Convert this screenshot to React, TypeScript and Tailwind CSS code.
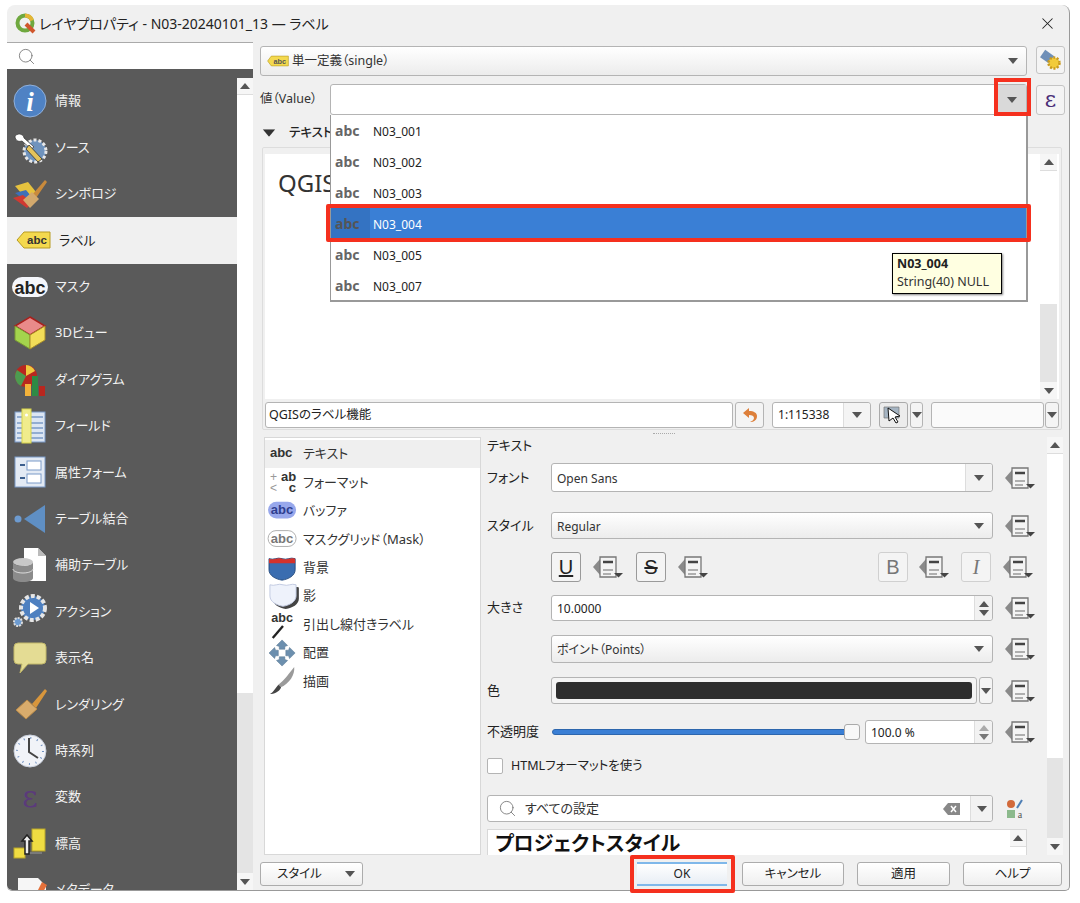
import React from 'react';
import { Search, X } from 'lucide-react';

const Arrow = ({ up = false, className = 'text-[#555]' }: { up?: boolean; className?: string }) => (
  <svg width="10" height="6" viewBox="0 0 10 6" className={className}>
    <path d={up ? 'M5 0L10 6H0Z' : 'M0 0H10L5 6Z'} fill="currentColor" />
  </svg>
);

const AbcText = ({ x = 18, y = 23, size = 13, fill = '#333' }: { x?: number; y?: number; size?: number; fill?: string }) => (
  <text x={x} y={y} textAnchor="middle" fontSize={size} fontWeight="700" fontFamily="Liberation Sans, sans-serif" fill={fill}>
    abc
  </text>
);

const icons: Record<string, React.ReactNode> = {
  info: (
    <>
      <circle cx="18" cy="18" r="16" fill="#4f82c4" stroke="#8fb0dc" />
      <text x="18" y="28" textAnchor="middle" fontSize="27" fontWeight="700" fontStyle="italic" fontFamily="Liberation Serif, serif" fill="#fff">i</text>
    </>
  ),
  source: (
    <>
      <circle cx="23" cy="21" r="11" fill="#6f93bd" stroke="#e8e8e8" strokeWidth="3" strokeDasharray="3 2" />
      <path d="M3 6c4-4 9-1 9 2l10 9-3 2-9-8c-3 1-7 0-7-5z" fill="#fff" stroke="#333" strokeWidth=".7" />
      <path d="M17 15l13 14-4 3L14 19z" fill="#e5c35a" stroke="#333" strokeWidth=".8" />
    </>
  ),
  symbology: (
    <>
      <path d="M3 10l13-4 8 10-8 9z" fill="#e6c23e" />
      <path d="M3 17l11-3 5 6-5 5z" fill="#3e70b8" />
      <path d="M1 22l10-3 9 8-5 5z" fill="#cf3a32" />
      <path d="M20 19L33 4l2 2-11 16z" fill="#c98a3c" />
      <path d="M11 24l9-8 7 7-9 9z" fill="#d3a96d" />
    </>
  ),
  label: (
    <>
      <path d="M1 18l7-8h26v16H8z" fill="#f4d94e" stroke="#b79b22" />
      <AbcText x={21} y={22} size={11.5} />
    </>
  ),
  mask: (
    <>
      <rect x="0" y="8" width="36" height="20" rx="10" fill="#f4f6fb" />
      <text x="18" y="25" textAnchor="middle" fontSize="18" fontWeight="700" fontFamily="Liberation Sans, sans-serif" fill="#222">abc</text>
    </>
  ),
  view3d: (
    <>
      <path d="M18 2l15 9-15 9-15-9z" fill="#e98a8a" stroke="#a8201c" strokeWidth="1.5" />
      <path d="M3 11l15 9v14L3 25z" fill="#a4d44d" stroke="#7a9a34" />
      <path d="M33 11l-15 9v14l15-9z" fill="#f2dd58" stroke="#a88d2a" />
    </>
  ),
  diagram: (
    <>
      <circle cx="14" cy="14" r="11" fill="#b9271f" />
      <path d="M14 14V3a11 11 0 0 1 9 6z" fill="#f0c93e" />
      <path d="M14 14L5 8a11 11 0 0 0 4 16z" fill="#4d9b50" />
      <rect x="13" y="22" width="6" height="12" fill="#f3b23a" />
      <rect x="20" y="14" width="6" height="20" fill="#2f8a45" />
      <rect x="27" y="24" width="6" height="10" fill="#b9271f" />
    </>
  ),
  fields: (
    <>
      <rect x="3" y="4" width="30" height="30" fill="#dce6f3" stroke="#7a9ac8" />
      <path d="M5 9h26M5 15h26M5 20h26M5 25h26M5 30h26" stroke="#7a9ac8" strokeWidth="1.5" />
      <rect x="10" y="1" width="9" height="34" fill="#f0ec8c" stroke="#d8d34a" />
      <circle cx="14.500" cy="7" r="1.500" fill="#fff" />
    </>
  ),
  form: (
    <>
      <rect x="3" y="3" width="30" height="30" fill="#e3eaf4" stroke="#7a9ac8" />
      <rect x="15" y="7" width="14" height="9" fill="#fff" stroke="#7a9ac8" />
      <rect x="15" y="20" width="14" height="9" fill="#fff" stroke="#7a9ac8" />
      <path d="M8 11h5M8 24h5" stroke="#3c5f8e" strokeWidth="2" />
    </>
  ),
  join: (
    <>
      <circle cx="6" cy="18" r="3.500" fill="#6d9bd0" />
      <path d="M12 18L33 4v28z" fill="#5f8fc4" />
    </>
  ),
  aux: (
    <>
      <path d="M12 1h14l8 8v25H12z" fill="#fff" />
      <path d="M26 1v8h8z" fill="#bbb" />
      <ellipse cx="11" cy="15" rx="10" ry="4" fill="#c8c8c8" />
      <path d="M1 15v16c0 2 4 4 10 4s10-2 10-4V15c0 2-4 4-10 4s-10-2-10-4z" fill="#8b8b8b" />
      <path d="M1 22c0 2 4 4 10 4s10-2 10-4" stroke="#ddd" fill="none" />
    </>
  ),
  action: (
    <>
      <circle cx="21" cy="15" r="12" fill="#4e80c0" stroke="#e6e6e6" strokeWidth="4" strokeDasharray="4 2" />
      <path d="M18 9l9 6-9 6z" fill="#fff" />
      <circle cx="6" cy="29" r="4" fill="#6d9bd0" stroke="#ddd" strokeWidth="2" strokeDasharray="2 1" />
    </>
  ),
  display: (
    <path d="M6 3h24a4 4 0 0 1 4 4v13a4 4 0 0 1-4 4H16l-8 9 2-9H6a4 4 0 0 1-4-4V7a4 4 0 0 1 4-4z" fill="#e4dc94" stroke="#c2b86a" />
  ),
  rendering: (
    <>
      <path d="M20 18L33 3l2 2-11 17z" fill="#d8963c" />
      <path d="M4 24l11-10 10 9-11 10z" fill="#d9ac6c" stroke="#b98a48" />
    </>
  ),
  time: (
    <>
      <circle cx="18" cy="18" r="16" fill="#f1f3f8" stroke="#c8cfdd" />
      <circle cx="18" cy="18" r="13" fill="none" stroke="#6d8fc0" strokeWidth="2" strokeDasharray="1 5.800" />
      <path d="M17 5v14l9 6" fill="none" stroke="#444" strokeWidth="2" />
    </>
  ),
  vars: (
    <text x="18" y="28" textAnchor="middle" fontSize="30" fontFamily="DejaVu Serif, serif" fill="#5b3a7a">ε</text>
  ),
  elevation: (
    <>
      <rect x="20" y="4" width="13" height="22" fill="#f0dc42" stroke="#b8a52a" />
      <rect x="2" y="23" width="11" height="10" fill="#f0dc42" stroke="#b8a52a" />
      <path d="M14 28h16" stroke="#999" />
      <path d="M15 10l-5 6h3v13h4V16h3z" fill="#eee" stroke="#222" strokeWidth="1.500" />
    </>
  ),
  metadata: (
    <>
      <path d="M6 6h20l8 8v22H6z" fill="#f6f6f6" />
      <path d="M10 20h16M10 25h14M10 30h10" stroke="#999" strokeWidth="2" />
      <path d="M30 10l5 3-9 16-5 3 1-6z" fill="#e4703a" />
    </>
  ),
};

const navItems = [
  ['info', '情報'], ['source', 'ソース'], ['symbology', 'シンボロジ'], ['label', 'ラベル'],
  ['mask', 'マスク'], ['view3d', '3Dビュー'], ['diagram', 'ダイアグラム'], ['fields', 'フィールド'],
  ['form', '属性フォーム'], ['join', 'テーブル結合'], ['aux', '補助テーブル'], ['action', 'アクション'],
  ['display', '表示名'], ['rendering', 'レンダリング'], ['time', '時系列'], ['vars', '変数'],
  ['elevation', '標高'], ['metadata', 'メタデータ'],
];

const DataDefined = ({ className = '' }: { className?: string }) => (
  <svg width="30" height="22" viewBox="0 0 30 22" className={`shrink-0 ${className}`}>
    <path d="M0 11l7-8v16z" fill="#8a8a8a" />
    <path d="M7 1h16v20H7z" fill="#f4f4f4" stroke="#777" strokeWidth="1.300" />
    <path d="M10 6h10" stroke="#444" strokeWidth="2.500" />
    <path d="M10 14h10" stroke="#999" strokeWidth="1.500" />
    <path d="M10 18h8" stroke="#999" strokeWidth="1.500" />
    <path d="M21 17h9l-4.500 4.500z" fill="#444" />
  </svg>
);

const Combo = ({ text, width = 'w-[442px]', white = false, divider = false }: { text: string; width?: string; white?: boolean; divider?: boolean }) => (
  <div className={`${width} h-full flex items-center rounded-[3px] border border-[#b4b4b4] ${white ? 'bg-white' : 'bg-gradient-to-b from-white to-[#ececec]'}`}>
    <span className="flex-1 pl-[5px] mt-[2px] text-[12px] text-[#333]">{text}</span>
    <span className={`w-[27px] h-full flex items-center justify-center ${divider ? 'border-l border-[#ddd] bg-[#f2f2f2] rounded-r-[3px]' : ''}`}>
      <Arrow />
    </span>
  </div>
);

const Spin = ({ dim = false }: { dim?: boolean }) => (
  <span className="w-[18px] h-full flex flex-col items-center justify-center gap-[3px] border-l border-[#ddd] bg-[#f2f2f2] rounded-r-[3px]">
    <Arrow up className={dim ? 'text-[#aaa]' : 'text-[#555]'} />
    <Arrow className={dim ? 'text-[#777]' : 'text-[#555]'} />
  </span>
);

const StyleButton = ({ children, active = false }: { children: React.ReactNode; active?: boolean }) => (
  <span className={`w-[30px] h-[30px] flex items-center justify-center rounded-[3px] border bg-[#f4f4f4] text-[20px] ${active ? 'border-[#9a9a9a] text-[#222]' : 'border-[#d0d0d0] text-[#777]'}`}>
    {children}
  </span>
);

const Row = ({ label, className, children }: { label?: string; className: string; children: React.ReactNode }) => (
  <div className={`flex items-center ${className}`}>
    <span className="w-[64px] shrink-0 text-[13px] text-[#222]">{label}</span>
    {children}
  </div>
);

const FootButton = ({ text, width }: { text: string; width: string }) => (
  <button className={`${width} h-[24px] rounded-[3px] border border-[#acacac] bg-gradient-to-b from-white to-[#efefef] text-[12.5px] text-[#222]`}>
    {text}
  </button>
);

const VScroll = ({ className, thumb }: { className: string; thumb: string }) => (
  <div className={`flex flex-col bg-white ${className}`}>
    <div className="h-[17px] shrink-0 flex items-center justify-center border-b border-[#ddd] bg-[#f6f6f6]"><Arrow up /></div>
    <div className={`${thumb} shrink-0 bg-white`} />
    <div className="flex-1 bg-[#e4e4e4]" />
    <div className="h-[17px] shrink-0 flex items-center justify-center bg-[#f6f6f6]"><Arrow /></div>
  </div>
);

const listItems = [
  ['text', 'テキスト'], ['format', 'フォーマット'], ['buffer', 'バッファ'], ['maskgrid', 'マスクグリッド（Mask）'],
  ['background', '背景'], ['shadow', '影'], ['callout', '引出し線付きラベル'], ['placement', '配置'], ['draw', '描画'],
];

const listIcons: Record<string, React.ReactNode> = {
  text: <AbcText x={15} y={18} size={14} />,
  format: (
    <>
      <text x="23" y="13" textAnchor="middle" fontSize="14" fontWeight="700" fontFamily="Liberation Sans, sans-serif" fill="#333">ab</text>
      <text x="27" y="25" textAnchor="middle" fontSize="14" fontWeight="700" fontFamily="Liberation Sans, sans-serif" fill="#333">c</text>
      <text x="7" y="13" textAnchor="middle" fontSize="13" fontFamily="Liberation Sans, sans-serif" fill="#999">+</text>
      <text x="7" y="25" textAnchor="middle" fontSize="13" fontFamily="Liberation Sans, sans-serif" fill="#999">&lt;</text>
    </>
  ),
  buffer: (
    <>
      <rect x="1" y="5" width="30" height="18" rx="9" fill="#98a8ec" />
      <AbcText x={16} y={18.500} size={14} fill="#2f3f90" />
    </>
  ),
  maskgrid: (
    <>
      <rect x="1" y="6" width="30" height="17" rx="8.500" fill="#fff" stroke="#aaa" />
      <AbcText x={16} y={19} size={14} fill="#777" />
    </>
  ),
  background: (
    <>
      <path d="M2 5c5 2 9-2 14 0s9-2 14 0v12c0 6-7 10-14 11-7-1-14-5-14-11z" fill="#3a6db0" stroke="#234a7e" />
      <path d="M2 5c5 2 9-2 14 0s9-2 14 0v5H2z" fill="#d4322c" />
    </>
  ),
  shadow: (
    <>
      <path d="M6 6c5 2 9-2 14 0s9-2 14 0v12c0 6-7 10-14 11-7-1-14-5-14-11z" fill="#444" />
      <path d="M3 3c5 2 9-2 14 0s9-2 14 0v12c0 6-7 10-14 11-7-1-14-5-14-11z" fill="#eef2fb" stroke="#c0c8e0" />
    </>
  ),
  callout: (
    <>
      <text x="16" y="12" textAnchor="middle" fontSize="13.500" fontWeight="700" fontFamily="Liberation Sans, sans-serif" fill="#333">abc</text>
      <path d="M6 29l11-13" stroke="#222" strokeWidth="2.500" />
    </>
  ),
  placement: (
    <g fill="#6c8fae" stroke="#56758f" strokeWidth=".5">
      <path d="M16 1l6 6-3 1v3h-6V8l-3-1z" />
      <path d="M16 29l6-6-3-1v-3h-6v3l-3 1z" />
      <path d="M2 15l6-6 1 3h3v6H9l-1 3z" />
      <path d="M30 15l-6-6-1 3h-3v6h3l1 3z" />
    </g>
  ),
  draw: (
    <>
      <path d="M29 0c1 8-5 18-15 22l-2-3C19 14 24 6 29 0z" fill="#9a9a9a" />
      <path d="M12 19l3 3c-2 5-8 7-12 7 4-2 6-7 9-10z" fill="#444" />
    </>
  ),
};

export default function App() {
  const columns = ['N03_001', 'N03_002', 'N03_003', 'N03_004', 'N03_005', 'N03_007'];

  return (
    <div className="w-[1080px] h-[903px] overflow-hidden bg-white pt-[5px] pl-[7px] relative [font-feature-settings:'palt'] font-['Noto_Sans','Noto_Sans_CJK_JP',sans-serif]">
      <div className="w-[1063px] h-[886px] flex flex-col bg-[#f0f0f0] rounded-t-[8px] rounded-b-[5px] border-r border-b border-[#999] overflow-hidden">
        {/* title bar */}
        <div className="h-[37px] shrink-0 flex items-center pl-[8px] pr-[12px]">
          <svg width="22" height="22" viewBox="0 0 22 22" className="shrink-0">
            <circle cx="10" cy="10" r="7.500" fill="none" stroke="#6fa83f" strokeWidth="4" />
            <path d="M10 2.500a7.500 7.500 0 0 1 7 5" fill="none" stroke="#e5b636" strokeWidth="4" />
            <path d="M11 11l8 8" stroke="#d0562c" strokeWidth="4" />
          </svg>
          <span className="flex-1 ml-[2px] text-[14px] text-[#222]">レイヤプロパティ - N03-20240101_13 — ラベル</span>
          <X size={19} strokeWidth={1.300} className="text-[#222]" />
        </div>

        <div className="flex-1 flex min-h-0">
          {/* left column */}
          <div className="w-[246px] shrink-0 flex flex-col">
            <div className="h-[27px] shrink-0 flex items-center pl-[10px] bg-white border-t border-[#aaa]">
              <Search size={19} strokeWidth={1.100} className="text-[#777]" />
            </div>
            <div className="h-[9px] shrink-0 bg-[#5a5a5a]" />
            <div className="flex-1 flex min-h-0">
              <div className="w-[230px] bg-[#5a5a5a] overflow-hidden rounded-bl-[5px]">
                {navItems.map(([key, name]) => (
                  <div key={key} className={`h-[46.400px] flex items-center ${key === 'label' ? 'pl-[9px] bg-[#f0f0f0] text-[#222]' : 'pl-[5px] text-[#f2f2f2]'}`}>
                    <svg width="36" height="36" viewBox="0 0 36 36" className="shrink-0">{icons[key]}</svg>
                    <span className={`text-[13px] ${key === 'label' ? 'ml-[7px]' : 'ml-[7px]'}`}>{name}</span>
                  </div>
                ))}
              </div>
              <VScroll className="w-[16px]" thumb="h-[598px]" />
            </div>
          </div>

          {/* right column */}
          <div className="flex-1 min-w-0 pl-[7px] pt-[4px]">
            <div className="h-[30px] flex gap-[9px]">
              <div className="w-[767px] flex items-center rounded-[3px] border border-[#b4b4b4] bg-gradient-to-b from-white to-[#ececec]">
                <svg width="22" height="12" viewBox="0 0 36 18" className="ml-[6px]">
                  <path d="M1 9l6-8h28v16H7z" fill="#f4d94e" stroke="#b79b22" />
                  <text x="21" y="14" textAnchor="middle" fontSize="12" fontWeight="700" fontFamily="Liberation Sans, sans-serif" fill="#555">abc</text>
                </svg>
                <span className="flex-1 ml-[3px] text-[12.5px] text-[#333]">単一定義（single）</span>
                <span className="w-[27px] flex justify-center"><Arrow /></span>
              </div>
              <span className="w-[29px] h-[28px] flex items-center justify-center rounded-[3px] border border-[#c4c4c4] bg-[#f4f4f4]">
                <svg width="22" height="22" viewBox="0 0 22 22">
                  <rect x="2" y="3" width="11" height="9" fill="#6e8fb8" transform="rotate(35 7 7)" />
                  <circle cx="14" cy="14" r="5.500" fill="#f2cb3a" stroke="#c89a20" strokeWidth="2.500" strokeDasharray="2 1.500" />
                </svg>
              </span>
            </div>

            <div className="h-[31px] mt-[8px] flex items-center">
              <span className="w-[70px] text-[12.5px] text-[#333]">値（Value）</span>
              <div className="w-[697px] h-full flex justify-end rounded-[3px] border border-[#b4b4b4] bg-white">
                <span className="w-[28px] h-full flex items-center justify-center bg-[#d9d9d9]"><Arrow /></span>
              </div>
              <span className="w-[29px] h-[30px] ml-[9px] flex items-center justify-center rounded-[3px] border border-[#c4c4c4] bg-[#f4f4f4] text-[22px] leading-none text-[#4b2f78] font-['DejaVu_Serif',serif]">ε</span>
            </div>

            <div className="h-[20px] mt-[8px] flex items-center">
              <span className="ml-[4px]"><Arrow className="text-[#333] scale-125" /></span>
              <span className="ml-[15px] text-[12.5px] font-medium text-[#222]">テキストサンプル</span>
            </div>

            {/* preview */}
            <div className="w-[800px] h-[283px] mt-[4px] ml-[2px] px-[2px] pt-[6px] border border-[#ddd] rounded-[2px]">
              <div className="h-[245px] flex bg-white">
                <div className="flex-1 pl-[13px] pt-[12px] text-[24px] leading-[34px] text-[#333]">QGISのラベル機能</div>
                <VScroll className="w-[17px] mr-[2px]" thumb="h-[133px]" />
              </div>
              <div className="h-[26px] mt-[3px] flex items-center">
                <div className="w-[470px] h-full flex items-center pl-[3px] rounded-[3px] border border-[#b4b4b4] bg-white text-[12.5px] text-[#222]">QGISのラベル機能</div>
                <span className="w-[29px] h-full ml-[2px] flex items-center justify-center rounded-[3px] border border-[#b4b4b4] bg-[#f4f4f4]">
                  <svg width="16" height="16" viewBox="0 0 16 16"><path d="M7 1L1 6l6 5V8c3 0 5 1 5 3s-2 3-4 4c4 0 7-2 7-6 0-3-3-5-8-5z" fill="#dd7f3a" /></svg>
                </span>
                <div className="w-[99px] h-full ml-[8px] flex items-center rounded-[3px] border border-[#b4b4b4] bg-white text-[12px] text-[#222]">
                  <span className="w-[70px] pl-[5px]">1:115338</span>
                  <span className="flex-1 h-full flex items-center justify-center border-l border-[#ddd] bg-[#f4f4f4] rounded-r-[3px]"><Arrow /></span>
                </div>
                <span className="w-[29px] h-full ml-[8px] flex items-center justify-center rounded-[3px] border border-[#aaa] bg-[#ececec]">
                  <svg width="20" height="18" viewBox="0 0 20 18">
                    <path d="M1 1h15v11H1z" fill="#a5b4c2" stroke="#777" strokeWidth=".7" />
                    <path d="M5 2l12 8-5 1 3 5-2 1-3-5-4 3z" fill="#fff" stroke="#111" />
                  </svg>
                </span>
                <span className="w-[14px] h-full ml-[2px] flex items-center justify-center rounded-[3px] border border-[#b4b4b4] bg-[#f4f4f4]"><Arrow /></span>
                <span className="w-[113px] h-full ml-[8px] rounded-[3px] border border-[#b4b4b4] bg-[#fafafa]" />
                <span className="w-[14px] h-full ml-[1px] flex items-center justify-center rounded-[3px] border border-[#b4b4b4] bg-[#f4f4f4]"><Arrow /></span>
              </div>
            </div>

            {/* splitter */}
            <div className="h-[7px] flex items-center justify-center pr-[2px]">
              <span className="w-[22px] border-t border-dotted border-[#aaa]" />
            </div>

            {/* lower panel */}
            <div className="h-[418px] flex">
              <div className="w-[217px] h-full ml-[4px] pt-[2px] bg-white border border-[#d8d8d8] shrink-0">
                {listItems.map(([key, name]) => (
                  <div key={key} className={`h-[28.400px] flex items-center pl-[2px] ${key === 'text' ? 'bg-[#efefef]' : ''}`}>
                    <svg width="32" height="28" viewBox="0 0 34 30" className="shrink-0">{listIcons[key]}</svg>
                    <span className="ml-[4px] text-[13px] text-[#333]">{name}</span>
                  </div>
                ))}
              </div>

              <div className="w-[558px] ml-[6px] h-full overflow-hidden shrink-0">
                <div className="h-[18px] flex items-center text-[13px] text-[#222]">テキスト</div>
                <Row label="フォント" className="h-[29px] mt-[8px]">
                  <Combo text="Open Sans" white divider />
                  <DataDefined className="ml-[12px]" />
                </Row>
                <Row label="スタイル" className="h-[27px] mt-[20px]">
                  <Combo text="Regular" />
                  <DataDefined className="ml-[12px]" />
                </Row>
                <Row className="h-[30px] mt-[13px]">
                  <StyleButton active><span className="underline font-['Liberation_Sans',sans-serif]">U</span></StyleButton>
                  <DataDefined className="ml-[12px]" />
                  <span className="ml-[13px]"><StyleButton active><span className="line-through font-['Liberation_Sans',sans-serif]">S</span></StyleButton></span>
                  <DataDefined className="ml-[12px]" />
                  <span className="ml-[170px]"><StyleButton><span className="font-['Liberation_Sans',sans-serif]">B</span></StyleButton></span>
                  <DataDefined className="ml-[11px]" />
                  <span className="ml-[12px]"><StyleButton><span className="italic font-['Liberation_Serif',serif]">I</span></StyleButton></span>
                  <DataDefined className="ml-[12px]" />
                </Row>
                <Row label="大きさ" className="h-[26px] mt-[13px]">
                  <div className="w-[442px] h-full flex items-center rounded-[3px] border border-[#b4b4b4] bg-white">
                    <span className="flex-1 pl-[5px] mt-[2px] text-[12px] text-[#222]">10.0000</span>
                    <Spin />
                  </div>
                  <DataDefined className="ml-[12px]" />
                </Row>
                <Row className="h-[28px] mt-[14px]">
                  <Combo text="ポイント（Points）" />
                  <DataDefined className="ml-[12px]" />
                </Row>
                <Row label="色" className="h-[27px] mt-[14px]">
                  <div className="w-[426px] h-full p-[4px] rounded-[3px] border border-[#b4b4b4] bg-[#f4f4f4]">
                    <div className="h-full rounded-[3px] bg-[#2e2e2e]" />
                  </div>
                  <span className="w-[14px] h-full ml-[2px] flex items-center justify-center rounded-[3px] border border-[#b4b4b4] bg-[#f4f4f4]"><Arrow /></span>
                  <DataDefined className="ml-[12px]" />
                </Row>
                <Row label="不透明度" className="h-[24px] mt-[16px]">
                  <div className="w-[293px] h-[6px] ml-[1px] rounded-l-[3px] border border-[#2d66ad] bg-[#3a7fd5]" />
                  <span className="w-[16px] h-[16px] -ml-[1px] rounded-[3px] border border-[#aaa] bg-[#f8f8f8]" />
                  <div className="w-[128px] h-full ml-[5px] flex items-center rounded-[3px] border border-[#b4b4b4] bg-white">
                    <span className="flex-1 pl-[5px] mt-[2px] text-[12px] text-[#222]">100.0 %</span>
                    <Spin dim />
                  </div>
                  <DataDefined className="ml-[12px]" />
                </Row>
                <div className="h-[18px] mt-[13px] flex items-center">
                  <span className="w-[16px] h-[16px] bg-white border border-[#b4b4b4] rounded-[2px]" />
                  <span className="ml-[8px] text-[12.5px] text-[#222]">HTMLフォーマットを使う</span>
                </div>
                <div className="h-[27px] mt-[20px] flex items-center">
                  <div className="w-[506px] h-full flex items-center rounded-[3px] border border-[#b4b4b4] bg-white">
                    <Search size={19} strokeWidth={1.100} className="ml-[10px] text-[#777]" />
                    <span className="flex-1 ml-[8px] text-[13px] text-[#333]">すべての設定</span>
                    <svg width="17" height="12" viewBox="0 0 17 12" className="mr-[10px]">
                      <path d="M5 0h12v12H5L0 6z" fill="#888" />
                      <path d="M8 3l5 6M13 3L8 9" stroke="#fff" strokeWidth="1.500" />
                    </svg>
                    <span className="w-[22px] h-full flex items-center justify-center border-l border-[#ddd] bg-[#f2f2f2] rounded-r-[3px]"><Arrow /></span>
                  </div>
                  <svg width="20" height="20" viewBox="0 0 20 20" className="ml-[12px]">
                    <circle cx="6" cy="5" r="4" fill="#d2693a" />
                    <path d="M12 9l5-8" stroke="#4f7fb5" strokeWidth="2" />
                    <rect x="2" y="11" width="8" height="8" fill="#8cb98c" />
                    <text x="15" y="19" textAnchor="middle" fontSize="10" fontFamily="Liberation Serif, serif" fill="#555">a</text>
                  </svg>
                </div>
                <div className="w-[540px] h-[40px] mt-[7px] flex bg-white border border-[#d8d8d8]">
                  <div className="flex-1 pl-[7px] text-[20px] leading-[28px] font-bold text-[#111]">プロジェクトスタイル</div>
                  <div className="w-[16px] h-[17px] flex items-center justify-center border-b border-[#ddd] bg-[#f6f6f6]"><Arrow up /></div>
                </div>
              </div>

              <VScroll className="w-[16px] ml-[2px] h-[418px]" thumb="h-[304px]" />
            </div>

            {/* button row */}
            <div className="h-[24px] mt-[7px] flex items-center">
              <button className="w-[103px] h-[24px] flex items-center rounded-[3px] border border-[#acacac] bg-gradient-to-b from-white to-[#efefef] text-[12.5px] text-[#222]">
                <span className="flex-1 text-center">スタイル</span>
                <span className="w-[24px] flex justify-center"><Arrow /></span>
              </button>
              <span className="w-[274px]" />
              <button className="w-[90px] h-[24px] border-y-2 border-[#7fb8ea] bg-gradient-to-b from-white to-[#e8eef5] text-[12px] text-[#222]">OK</button>
              <span className="w-[15px]" />
              <FootButton text="キャンセル" width="w-[102px]" />
              <span className="w-[13px]" />
              <FootButton text="適用" width="w-[93px]" />
              <span className="w-[13px]" />
              <FootButton text="ヘルプ" width="w-[99px]" />
            </div>
          </div>
        </div>
      </div>

      {/* field dropdown */}
      <div className="absolute left-[330px] top-[115px] w-[698px] h-[187px] bg-white border-r-2 border-b-2 border-l border-[#999]">
        {columns.map(name => (
          <div key={name} className={`h-[31px] flex items-center ${name === 'N03_004' ? 'bg-[#3a7fd5] text-white' : 'text-[#222]'}`}>
            <span className={`w-[39px] h-full flex items-center pl-[4px] text-[14px] font-bold ${name === 'N03_004' ? 'bg-[#3473c2] text-[#555]' : 'text-[#666]'}`}>abc</span>
            <span className="ml-[3px] mt-[2px] text-[12px]">{name}</span>
          </div>
        ))}
      </div>

      {/* tooltip */}
      <div className="absolute left-[892px] top-[253px] w-[110px] h-[41px] pl-[4px] pt-[1px] bg-[#ffffe1] border border-black shadow-[1px_1px_2px_rgba(0,0,0,0.5)] text-[12.5px] leading-[18px] text-[#222]">
        <div className="font-bold">N03_004</div>
        <div className="text-[#333]">String(40) NULL</div>
      </div>

      {/* red annotations */}
      <div className="absolute left-[994px] top-[78px] w-[37px] h-[38px] border-[4px] border-[#f5301e]" />
      <div className="absolute left-[326px] top-[204px] w-[705px] h-[38px] border-[4px] border-[#f5301e] rounded-[2px]" />
      <div className="absolute left-[630px] top-[855px] w-[105px] h-[38px] border-[4px] border-[#f5301e] rounded-[2px]" />
    </div>
  );
}
